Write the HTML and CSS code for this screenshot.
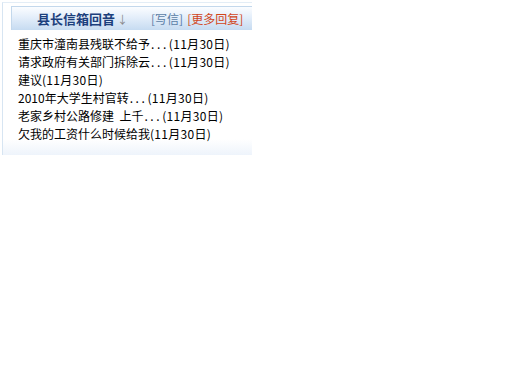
FILE: index.html
```html
<!DOCTYPE html>
<html>
<head>
<meta charset="utf-8">
<link rel="stylesheet" href="styles.css">
</head>
<body>
<div class="panel">
  <div class="head">
    <span class="title">县长信箱回音<span class="arrow">↓</span></span>
    <a class="write" href="#">[写信]</a>
    <a class="more" href="#">[更多回复]</a>
  </div>
  <ul class="list">
    <li>重庆市潼南县残联不给予<span class="dots">...</span><span class="date">(11月30日)</span></li>
    <li>请求政府有关部门拆除云<span class="dots">...</span><span class="date">(11月30日)</span></li>
    <li>建议<span class="date">(11月30日)</span></li>
    <li>2010年大学生村官转<span class="dots">...</span><span class="date">(11月30日)</span></li>
    <li>老家乡村公路修建&nbsp;&nbsp;上千<span class="dots">...</span><span class="date">(11月30日)</span></li>
    <li>欠我的工资什么时候给我<span class="date">(11月30日)</span></li>
  </ul>
</div>
</body>
</html>
```
FILE: styles.css
```css
html, body {
  margin: 0;
  padding: 0;
  background: #ffffff;
}
body {
  font-family: "Noto Sans CJK SC", "Liberation Sans", sans-serif;
  font-size: 12px;
  color: #000;
}
.panel {
  margin: 2px 0 0 2px;
  width: 250px;
  border-left: 1px solid #d7e5f2;
  border-top: 1px solid #e3edf6;
  padding: 3px 0 0 8px;
  background: linear-gradient(to bottom, #ffffff 0, #ffffff 136px, #edf3fb 153px);
  height: 153px;
  box-sizing: border-box;
}
.head {
  height: 24px;
  border-top: 1px solid #c3d8ec;
  border-left: 1px solid #c3d8ec;
  background: linear-gradient(to bottom, #fbfdff 0%, #e4eefa 45%, #c6dbf1 100%);
  display: flex;
  align-items: center;
  box-sizing: border-box;
}
.title {
  font-size: 13px;
  font-weight: bold;
  color: #1c3f7c;
  margin-left: 25px;
  width: 114px;
  line-height: 16px;
}
.arrow {
  color: #8a8a8a;
  font-weight: normal;
  font-size: 11px;
  margin-left: 2px;
}
.head a {
  text-decoration: none;
  font-size: 12px;
  line-height: 16px;
}
.write {
  color: #5b7ea6;
}
.more {
  color: #d2471c;
  margin-left: 4px;
}
.list {
  list-style: none;
  margin: 0;
  padding: 5px 0 0 7px;
  line-height: 18px;
}
.list li {
  white-space: nowrap;
}
.dots {
  letter-spacing: 2.6px;
  margin-left: 1px;
}
.date {
  letter-spacing: 0.3px;
}
```
